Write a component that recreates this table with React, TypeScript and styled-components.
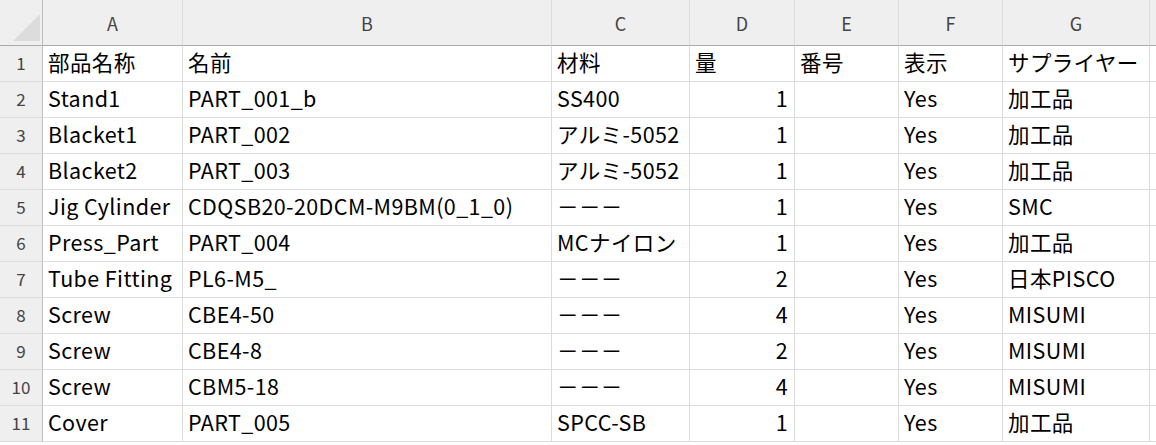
import React from "react";
import styled, { createGlobalStyle } from "styled-components";

const GlobalStyle = createGlobalStyle`
  html, body {
    margin: 0;
    padding: 0;
    background: #ffffff;
    overflow: hidden;
  }
  body {
    font-family: "Noto Sans CJK JP", "Noto Sans", sans-serif;
  }
`;

const columns = ["A", "B", "C", "D", "E", "F", "G", ""];
const widths = "43px 140px 369px 138px 105px 104px 104px 147px 1fr";

type Align = "left" | "right";

interface RowData {
  cells: string[];
}

const rows: RowData[] = [
  { cells: ["部品名称", "名前", "材料", "量", "番号", "表示", "サプライヤー", ""] },
  { cells: ["Stand1", "PART_001_b", "SS400", "1", "", "Yes", "加工品", ""] },
  { cells: ["Blacket1", "PART_002", "アルミ-5052", "1", "", "Yes", "加工品", ""] },
  { cells: ["Blacket2", "PART_003", "アルミ-5052", "1", "", "Yes", "加工品", ""] },
  { cells: ["Jig Cylinder", "CDQSB20-20DCM-M9BM(0_1_0)", "－－－", "1", "", "Yes", "SMC", ""] },
  { cells: ["Press_Part", "PART_004", "MCナイロン", "1", "", "Yes", "加工品", ""] },
  { cells: ["Tube Fitting", "PL6-M5_", "－－－", "2", "", "Yes", "日本PISCO", ""] },
  { cells: ["Screw", "CBE4-50", "－－－", "4", "", "Yes", "MISUMI", ""] },
  { cells: ["Screw", "CBE4-8", "－－－", "2", "", "Yes", "MISUMI", ""] },
  { cells: ["Screw", "CBM5-18", "－－－", "4", "", "Yes", "MISUMI", ""] },
  { cells: ["Cover", "PART_005", "SPCC-SB", "1", "", "Yes", "加工品", ""] },
];

const Sheet = styled.div`
  display: grid;
  grid-template-columns: ${widths};
  grid-template-rows: 46px;
  grid-auto-rows: 36px;
  width: 1156px;
  height: 445px;
  overflow: hidden;
  background: #ffffff;
`;

const Line = styled.div`
  display: contents;
`;

const Corner = styled.div`
  position: relative;
  background: #efefef;
  border-right: 1px solid #bdbdbd;
  border-bottom: 1px solid #ababab;
  box-sizing: border-box;
`;

const Triangle = styled.svg`
  position: absolute;
  left: 12px;
  top: 13px;
`;

const ColHead = styled.div`
  background: #efefef;
  border-right: 1px solid #dcdcdc;
  border-bottom: 1px solid #ababab;
  box-sizing: border-box;
  display: flex;
  align-items: center;
  justify-content: center;
  padding-top: 1px;
  font-size: 18px;
  line-height: 1;
  color: #444444;
`;

const RowHead = styled.div`
  background: #efefef;
  border-right: 1px solid #bdbdbd;
  border-bottom: 1px solid #dcdcdc;
  box-sizing: border-box;
  display: flex;
  align-items: flex-end;
  justify-content: center;
  padding-bottom: 10px;
  font-size: 17px;
  line-height: 1;
  color: #444444;
`;

const Cell = styled.div<{ $align: Align }>`
  border-right: 1px solid #dcdcdc;
  border-bottom: 1px solid #dcdcdc;
  box-sizing: border-box;
  display: flex;
  align-items: flex-end;
  justify-content: ${(p) => (p.$align === "right" ? "flex-end" : "flex-start")};
  padding: 0 6px 9px 5px;
  font-size: 21.5px;
  line-height: 1;
  letter-spacing: 0.4px;
  color: #000000;
  white-space: nowrap;
`;

const App = () => {
  return (
    <>
      <GlobalStyle />
      <Sheet>
        <Line>
          <Corner>
            <Triangle width="29" height="29" viewBox="0 0 29 29">
              <polygon points="1,28 28,28 28,1" fill="#dcdcdc" />
            </Triangle>
          </Corner>
          {columns.map((c, i) => (
            <ColHead key={i}>{c}</ColHead>
          ))}
        </Line>
        {rows.map((r, ri) => (
          <Line key={ri}>
            <RowHead>{ri + 1}</RowHead>
            {r.cells.map((v, ci) => (
              <Cell key={ci} $align={ci === 3 && ri > 0 ? "right" : "left"}>
                {v}
              </Cell>
            ))}
          </Line>
        ))}
      </Sheet>
    </>
  );
};

export default App;
